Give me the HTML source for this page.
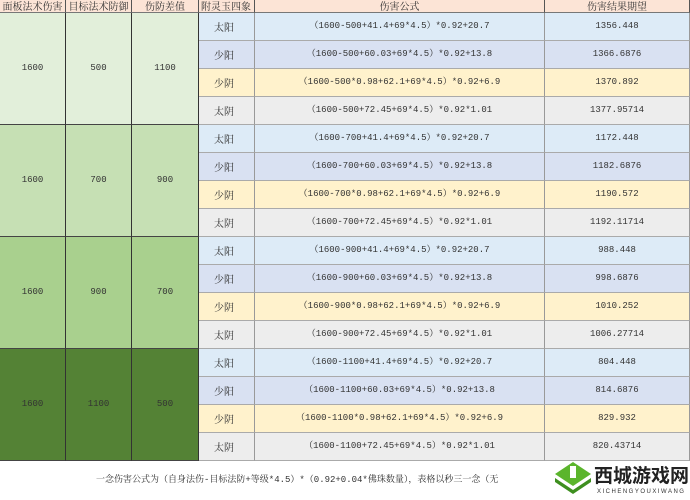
<!DOCTYPE html>
<html><head><meta charset="utf-8"><style>
*{margin:0;padding:0;box-sizing:border-box}
body{width:690px;height:500px;background:#fff;position:relative;overflow:hidden;font-family:"Liberation Mono","Noto Serif CJK SC",monospace;font-size:9px;color:#333}
.c{position:absolute;display:flex;align-items:center;justify-content:center;border-right:1px solid #555;border-bottom:1px solid #888;white-space:nowrap;line-height:1}
.h{background:#fce4d6;border-bottom:1px solid #777;font-size:10px;font-family:"Noto Serif CJK SC",serif}
.ty{background:#ddebf7}.sy{background:#d9e1f2}.sn{background:#fff2cc}.tn{background:#ededed}
.r{border-bottom:1px solid #aaa;border-right:1px solid #999}
.k{font-family:"Noto Serif CJK SC",serif;font-size:10px}
</style></head><body>
<div class="c h" style="left:0;top:0;width:66px;height:13px">面板法术伤害</div>
<div class="c h" style="left:66px;top:0;width:66px;height:13px">目标法术防御</div>
<div class="c h" style="left:132px;top:0;width:67px;height:13px">伤防差值</div>
<div class="c h" style="left:199px;top:0;width:56px;height:13px;justify-content:flex-start;padding-left:2px">附灵玉四象</div>
<div class="c h" style="left:255px;top:0;width:290px;height:13px">伤害公式</div>
<div class="c h" style="left:545px;top:0;width:145px;height:13px">伤害结果期望</div>
<div id="t"></div>
<script>
var G=[["500","1100","#e2efda",["1356.448","1366.6876","1370.892","1377.95714"]],
["700","900","#c6e0b4",["1172.448","1182.6876","1190.572","1192.11714"]],
["900","700","#a9d08e",["988.448","998.6876","1010.252","1006.27714"]],
["1100","500","#548235",["804.448","814.6876","829.932","820.43714"]]];
var n=["太阳","少阳","少阴","太阴"],cl=["ty","sy","sn","tn"],h="";
G.forEach(function(g,k){var t=13+112*k;
var d=g[0];var f=["（1600-"+d+"+41.4+69*4.5）*0.92+20.7","（1600-"+d+"+60.03+69*4.5）*0.92+13.8","（1600-"+d+"*0.98+62.1+69*4.5）*0.92+6.9","（1600-"+d+"+72.45+69*4.5）*0.92*1.01"];
[["1600",0,66],[g[0],66,66],[g[1],132,67]].forEach(function(a){h+='<div class="c" style="left:'+a[1]+'px;top:'+t+'px;width:'+a[2]+'px;height:112px;background:'+g[2]+';border-bottom:1px solid #444;border-right:1px solid #333">'+a[0]+'</div>';});
for(var i=0;i<4;i++){var y=t+28*i;
h+='<div class="c r k '+cl[i]+'" style="left:199px;top:'+y+'px;width:56px;height:28px;justify-content:flex-start;padding-left:15px">'+n[i]+'</div>';
h+='<div class="c r '+cl[i]+'" style="left:255px;top:'+y+'px;width:290px;height:28px">'+f[i]+'</div>';
h+='<div class="c r '+cl[i]+'" style="left:545px;top:'+y+'px;width:145px;height:28px">'+g[3][i]+'</div>';}
});
document.getElementById("t").innerHTML=h;
</script>
<div style="position:absolute;left:96px;top:472px;font-size:9px;white-space:nowrap">一念伤害公式为（自身法伤-目标法防+等级*4.5）*（0.92+0.04*佛珠数量），表格以秒三一念（无</div>
<div style="position:absolute;left:520px;top:466px;width:170px;height:34px;background:#fff"></div>
<svg style="position:absolute;left:553px;top:460px" width="40" height="36" viewBox="0 0 40 36"><polygon points="20,2 38,14 20,26 2,14" fill="#5bb52c"/><polygon points="2,18 20,30 38,18 38,22 20,34 2,22" fill="#3e8f1f"/><rect x="17" y="6" width="6" height="12" fill="#fff"/></svg>
<div style="position:absolute;left:594px;top:463px;width:100px;white-space:nowrap;font-family:'Noto Sans CJK SC',sans-serif;font-weight:bold;font-size:19px;line-height:24px;color:#222">西城游戏网</div>
<div style="position:absolute;left:597px;top:489px;font-size:6px;letter-spacing:1.5px;white-space:nowrap;color:#333;font-family:'Liberation Sans',sans-serif">XICHENGYOUXIWANG</div>
</body></html>
